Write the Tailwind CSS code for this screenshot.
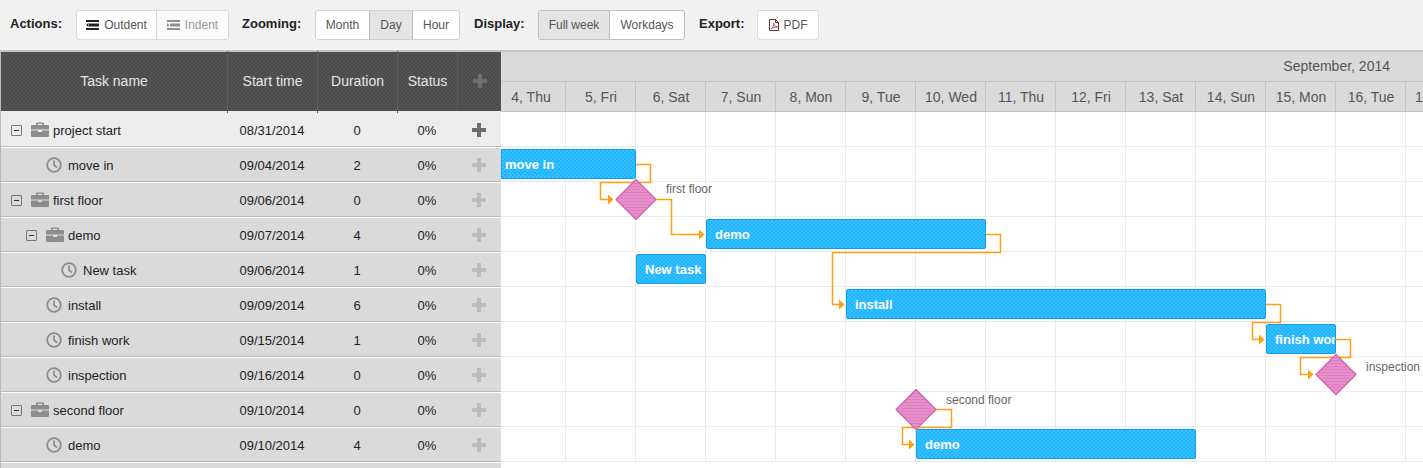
<!DOCTYPE html>
<html lang="en">
<head>
  <meta charset="UTF-8">
  <title>Gantt chart</title>
  <script src="https://cdn.jsdelivr.net/npm/@tailwindcss/browser@4"></script>
</head>
<body class="h-[468px] overflow-hidden bg-white font-['Liberation_Sans',Arial,sans-serif] text-[13px] text-[#222]">
  <!-- icons -->
  <svg class="hidden">
    <symbol id="briefcase" viewBox="0 0 18 15">
      <path fill="#8c8c8c" d="M6 0.5h6a1 1 0 0 1 1 1V3h4a1 1 0 0 1 1 1v3.500H0V4a1 1 0 0 1 1-1h4V1.500a1 1 0 0 1 1-1zM6.500 1.700V3h5V1.700z M0 8.500h7v1.500h4V8.500h7V14a1 1 0 0 1-1 1H1a1 1 0 0 1-1-1z"/>
    </symbol>
    <symbol id="clock" viewBox="0 0 16 16">
      <circle cx="8" cy="8" r="6.800" fill="none" stroke="#8c8c8c" stroke-width="1.800"/>
      <path d="M8 3.500V8l3 2.600" fill="none" stroke="#8c8c8c" stroke-width="1.700"/>
    </symbol>
  </svg>

  <!-- toolbar -->
  <div class="flex h-[50px] items-center bg-[#f1f1f1] pb-[1px]">
    <b class="ml-[10px] w-[66px] -translate-y-[1px]">Actions:</b>
    <div class="flex h-[30px] w-[153px] rounded-[3px] border border-[#d9d9d9] bg-white text-xs text-[#555]">
      <span class="flex w-[80px] items-center justify-center gap-[5px] border-r border-[#d9d9d9]">
        <svg width="13" height="10" viewBox="0 0 13 10"><path fill="#222" d="M0 0h13v2H0zM0 8h13v2H0zM3 3.500h10v3H3zM0 5l2.500-2v4z"/></svg><span>Outdent</span>
      </span>
      <span class="flex flex-1 items-center justify-center gap-[5px] bg-[#fafafa] text-[#999]">
        <svg width="13" height="10" viewBox="0 0 13 10"><path fill="#8f8f8f" d="M0 0h13v2H0zM0 8h13v2H0zM3 3.500h10v3H3zM2.500 5L0 3v4z"/></svg>Indent
      </span>
    </div>
    <b class="ml-[13px] w-[73px] -translate-y-[1px]">Zooming:</b>
    <div class="flex h-[30px] w-[145px] rounded-[3px] border border-[#d0d0d0] bg-white text-xs text-[#555]">
      <span class="flex w-[53px] items-center justify-center">Month</span>
      <span class="flex w-[44px] items-center justify-center border-x border-[#bdbdbd] bg-[#e4e4e4]">Day</span>
      <span class="flex flex-1 items-center justify-center">Hour</span>
    </div>
    <b class="ml-[14px] w-[64px] -translate-y-[1px]">Display:</b>
    <div class="flex h-[30px] w-[147px] rounded-[3px] border border-[#c0c0c0] bg-white text-xs text-[#555]">
      <span class="flex w-[71px] items-center justify-center rounded-l-[3px] border-r border-[#bdbdbd] bg-[#e4e4e4]">Full week</span>
      <span class="flex flex-1 items-center justify-center">Workdays</span>
    </div>
    <b class="ml-[14px] w-[58px] -translate-y-[1px]">Export:</b>
    <div class="flex h-[30px] w-[62px] items-center justify-center gap-[5px] rounded-[3px] border border-[#d9d9d9] bg-white text-xs text-[#555]">
      <svg width="10" height="12" viewBox="0 0 10 12"><path fill="none" stroke="#5a3a3a" d="M.5.500h6l3 3v8h-9zM6.500.500v3h3"/><path fill="none" stroke="#b03030" stroke-width=".8" d="M2 10c2-1 3-4 2.500-6C5 6 6 8 8.500 8 6 8 3.500 8.500 2 10z"/></svg>PDF
    </div>
  </div>

  <div class="flex h-[418px] border-t-2 border-[#c4c4c4]">
    <!-- task grid -->
    <div class="w-[501px] shrink-0 border-l border-[#bbb]">
      <div class="flex h-[59px] items-center bg-[#4f4f4f] bg-[repeating-conic-gradient(#535353_0%_25%,#4b4b4b_0%_50%)] bg-[length:4px_4px] text-sm text-[#e6e6e6]">
        <div class="w-[226px] pb-[2px] text-center">Task name</div>
        <div class="w-[90px] border-l border-[#5c5c5c] pt-[20px] pb-[22px] text-center">Start time</div>
        <div class="w-[80px] border-l border-[#5c5c5c] pt-[20px] pb-[22px] text-center">Duration</div>
        <div class="w-[60px] border-l border-[#5c5c5c] pt-[20px] pb-[22px] text-center">Status</div>
        <div class="flex h-full flex-1 items-center justify-center border-l border-[#5c5c5c] pb-[2px]">
          <svg width="14" height="14" viewBox="0 0 14 14"><path fill="#6f6f6f" d="M5 0h4v5h5v4H9v5H5V9H0V5h5z"/></svg>
        </div>
      </div>
      <div id="rows" class="bg-[#ececec] pt-[1px]"></div>
    </div>

    <!-- timeline -->
    <div class="min-w-0 flex-1 overflow-hidden">
      <div class="flex h-[29px] items-center justify-end bg-[#dadada] pr-[33px] pb-[2px] text-sm text-[#555]">September, 2014</div>
      <div id="scale" class="-ml-[5px] flex h-[31px] border-y border-[#c4c4c4] bg-[#dadada] text-sm text-[#555]"></div>
      <div class="relative">
        <div id="lines"></div>

        <svg class="absolute top-0 left-0" width="922" height="358" viewBox="501 112 922 358">
          <defs>
            <pattern id="stripes" width="4" height="3" patternUnits="userSpaceOnUse">
              <rect width="4" height="3" fill="#e88ecb"/><rect width="4" height="1" fill="#dc80bf"/>
            </pattern>
          </defs>
          <g fill="none" stroke="#ffa011" stroke-width="1.500">
            <path d="M636 164.500H650.500V182.500H600.500V199.500H609"/>
            <path d="M656 199.500H671.500V234.500H700"/>
            <path d="M986 234.500H1000.500V252.500H832.500V304.500H840"/>
            <path d="M1266 304.500H1280.500V322.500H1252.500V339.500H1260"/>
            <path d="M1336 339.500H1350.500V357.500H1300.500V374.500H1309"/>
            <path d="M936 409.500H951.500V427.500H902.500V444.500H910"/>
          </g>
          <g fill="#ffa011">
            <path d="M608 194.500l5.500 5-5.500 5z"/>
            <path d="M699 229.500l5.500 5-5.500 5z"/>
            <path d="M839 299.500l5.500 5-5.500 5z"/>
            <path d="M1259 334.500l5.500 5-5.500 5z"/>
            <path d="M1308 369.500l5.500 5-5.500 5z"/>
            <path d="M909 439.500l5.500 5-5.500 5z"/>
          </g>
          <g fill="url(#stripes)" stroke="#cc66b0" stroke-width="1.200" stroke-linejoin="round">
            <path d="M636 179.500l20 20-20 20-20-20z"/>
            <path d="M1336 354.500l20 20-20 20-20-20z"/>
            <path d="M916 389.500l20 20-20 20-20-20z"/>
          </g>
        </svg>

        <!-- bars -->
        <div class="absolute top-[37px] left-0 flex h-[30px] w-[135px] items-center overflow-hidden rounded-r-[2px] border border-[#0f9fe6] bg-[repeating-conic-gradient(#1fb4ff_0%_25%,#38bfff_0%_50%)] bg-[length:4px_4px] pt-[2px] pl-[3px] font-bold text-white">move in</div>
        <div class="absolute top-[107px] left-[205px] flex h-[30px] w-[280px] items-center overflow-hidden rounded-[2px] border border-[#0f9fe6] bg-[repeating-conic-gradient(#1fb4ff_0%_25%,#38bfff_0%_50%)] bg-[length:4px_4px] pt-[2px] pl-[8px] font-bold text-white">demo</div>
        <div class="absolute top-[142px] left-[135px] flex h-[30px] w-[70px] items-center overflow-hidden rounded-[2px] border border-[#0f9fe6] bg-[repeating-conic-gradient(#1fb4ff_0%_25%,#38bfff_0%_50%)] bg-[length:4px_4px] pt-[2px] pl-[8px] font-bold whitespace-nowrap text-white">New task</div>
        <div class="absolute top-[177px] left-[345px] flex h-[30px] w-[420px] items-center overflow-hidden rounded-[2px] border border-[#0f9fe6] bg-[repeating-conic-gradient(#1fb4ff_0%_25%,#38bfff_0%_50%)] bg-[length:4px_4px] pt-[2px] pl-[8px] font-bold text-white">install</div>
        <div class="absolute top-[212px] left-[765px] flex h-[30px] w-[70px] items-center overflow-hidden rounded-[2px] border border-[#0f9fe6] bg-[repeating-conic-gradient(#1fb4ff_0%_25%,#38bfff_0%_50%)] bg-[length:4px_4px] pt-[2px] pl-[8px] font-bold whitespace-nowrap text-white">finish work</div>
        <div class="absolute top-[317px] left-[415px] flex h-[30px] w-[280px] items-center overflow-hidden rounded-[2px] border border-[#0f9fe6] bg-[repeating-conic-gradient(#1fb4ff_0%_25%,#38bfff_0%_50%)] bg-[length:4px_4px] pt-[2px] pl-[8px] font-bold text-white">demo</div>

        <!-- milestone labels -->
        <span class="absolute top-[69px] left-[165px] text-xs text-[#666]">first floor</span>
        <span class="absolute top-[247px] left-[865px] text-xs text-[#666]">inspection</span>
        <span class="absolute top-[280px] left-[445px] text-xs text-[#666]">second floor</span>
      </div>
    </div>
  </div>

  <script>
    // name, indent level, icon, start, duration
    const tasks = [
      ["project start", 0, "briefcase", "08/31/2014", 0],
      ["move in", 1, "clock", "09/04/2014", 2],
      ["first floor", 0, "briefcase", "09/06/2014", 0],
      ["demo", 1, "briefcase", "09/07/2014", 4],
      ["New task", 2, "clock", "09/06/2014", 1],
      ["install", 1, "clock", "09/09/2014", 6],
      ["finish work", 1, "clock", "09/15/2014", 1],
      ["inspection", 1, "clock", "09/16/2014", 0],
      ["second floor", 0, "briefcase", "09/10/2014", 0],
      ["demo", 1, "clock", "09/10/2014", 4],
    ];
    const days = ["4, Thu","5, Fri","6, Sat","7, Sun","8, Mon","9, Tue","10, Wed","11, Thu","12, Fri","13, Sat","14, Sun","15, Mon","16, Tue","17, Wed"];

    document.getElementById("rows").innerHTML = tasks.map((t, i) => {
      const bg = i === 0 ? "bg-[#ececec] border-t-[#ececec]" : "bg-[#dadada] border-t-white";
      const plus = i === 0 ? "#6e6e6e" : "#bcbcbc";
      const toggle = t[2] === "briefcase"
        ? `<span class="mr-[9px] flex h-[11px] w-[11px] items-center justify-center rounded-[1px] border border-[#777]"><span class="h-[1px] w-[5px] bg-[#333]"></span></span>`
        : `<span class="mr-[9px] w-[11px]"></span>`;
      const size = t[2] === "briefcase" ? 'width="18" height="15" class="-translate-y-[1px]"' : 'width="16" height="16" class="mr-[2px] -translate-y-[1px]"';
      return `<div class="flex h-[35px] items-center border-t border-b border-b-[#b9b9b9] pt-[2px] ${bg}">
        <div class="flex w-[226px] items-center pl-[10px]" style="margin-left:${t[1] * 15}px;margin-right:${-t[1] * 15}px">
          ${toggle}<svg ${size}><use href="#${t[2]}"></use></svg><span class="ml-[4px]">${t[0]}</span>
        </div>
        <div class="w-[90px] text-center">${t[3]}</div>
        <div class="w-[80px] text-center">${t[4]}</div>
        <div class="w-[60px] text-center">0%</div>
        <div class="flex flex-1 -translate-y-[1px] items-center justify-center">
          <svg width="14" height="14" viewBox="0 0 14 14"><path fill="${plus}" d="M5 0h4v5h5v4H9v5H5V9H0V5h5z"/></svg>
        </div>
      </div>`;
    }).join("") + `<div class="h-[10px] border-t border-t-white bg-[#dadada]"></div>`;

    document.getElementById("scale").innerHTML = days.map(d =>
      `<div class="flex w-[70px] shrink-0 items-center justify-center border-r border-[#c4c4c4] pl-[1px]">${d}</div>`
    ).join("");

    document.getElementById("lines").innerHTML = tasks.map(() =>
      `<div class="-ml-[5px] flex h-[35px] border-b border-[#ebebeb]">${days.map(() => `<div class="w-[70px] shrink-0 border-r border-[#ebebeb]"></div>`).join("")}</div>`
    ).join("");
  </script>
</body>
</html>
